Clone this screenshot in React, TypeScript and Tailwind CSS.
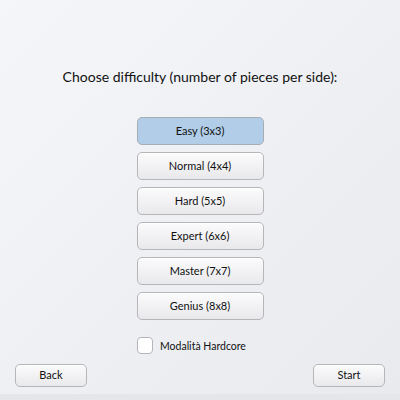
const levels = ['Easy (3x3)', 'Normal (4x4)', 'Hard (5x5)', 'Expert (6x6)', 'Master (7x7)', 'Genius (8x8)'];

const btn =
  'rounded-[5px] border border-[#b4b6ba] bg-gradient-to-b from-[#fbfbfc] to-[#e9e9ec] text-[#111] shadow-[inset_0_1px_0_#fff]';

export default function App() {
  return (
    <div className="w-[400px] h-[400px] flex flex-col bg-[#e4e6ea] font-['Lato','Liberation_Sans',sans-serif]">
      <div className="h-[394px] flex flex-col bg-gradient-to-br from-[#f4f6f9] to-[#e8eaee]">
        <h1 className="mt-[66px] text-center text-[14px] leading-[22px] text-[#111]">
          Choose difficulty (number of pieces per side):
        </h1>

        <div className="mt-[29px] flex flex-col items-center gap-[7px]">
          {levels.map((l, i) => (
            <button
              key={l}
              className={
                i === 0
                  ? 'w-[127px] h-[28px] rounded-[5px] border-[1.5px] border-[#a7adb5] bg-[#b2cde8] text-[11px] text-[#111]'
                  : `w-[127px] h-[28px] text-[11px] ${btn}`
              }
            >
              {l}
            </button>
          ))}
        </div>

        <div className="mt-[16px] ml-[137px] flex items-center gap-[7px]">
          <span className="w-[16px] h-[17px] rounded-[4px] border border-[#b4b6ba] bg-white" />
          <span className="text-[10.5px] leading-[17px] pt-[2px] text-[#111]">Modalità Hardcore</span>
        </div>

        <div className="mt-[9px] px-[15px] flex justify-between">
          <button className={`w-[72px] h-[23px] text-[11px] ${btn}`}>Back</button>
          <button className={`w-[72px] h-[23px] text-[11px] ${btn}`}>Start</button>
        </div>
      </div>
    </div>
  );
}
